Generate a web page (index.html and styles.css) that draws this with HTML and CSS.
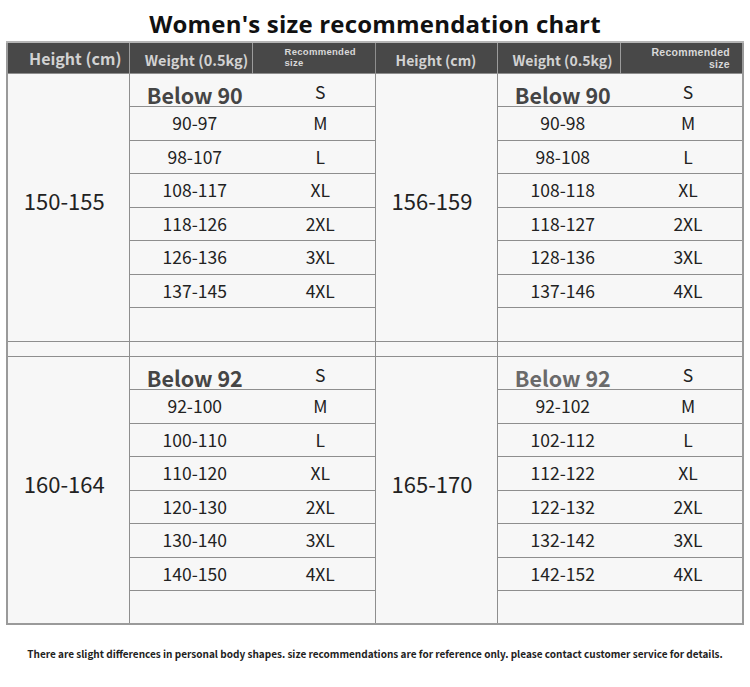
FILE: index.html
```html
<!DOCTYPE html>
<html lang="en">
<head>
<meta charset="utf-8">
<title>Women's size recommendation chart</title>
<link rel="stylesheet" href="styles.css">
</head>
<body>
<main class="page">
  <h1 class="title">Women's size recommendation chart</h1>
  <table class="chart">
    <colgroup>
      <col class="c-h"><col class="c-w"><col class="c-s">
      <col class="c-h"><col class="c-w"><col class="c-s">
    </colgroup>
    <thead>
      <tr class="head">
        <th class="th-h th-big">Height (cm)</th>
        <th class="th-w th-w-l">Weight (0.5kg)</th>
        <th class="th-s th-s-l"><span class="rec">Recommended<br>size</span></th>
        <th class="th-h half">Height (cm)</th>
        <th class="th-w">Weight (0.5kg)</th>
        <th class="th-s th-s-r"><span class="rec">Recommended<br>size</span></th>
      </tr>
    </thead>
    <tbody>
      <tr class="first">
        <td class="hcell" rowspan="8">150-155</td>
        <td class="w below">Below 90</td><td class="s s-top">S</td>
        <td class="hcell half" rowspan="8">156-159</td>
        <td class="w below">Below 90</td><td class="s s-top">S</td>
      </tr>
      <tr><td class="w">90-97</td><td class="s">M</td><td class="w">90-98</td><td class="s">M</td></tr>
      <tr><td class="w">98-107</td><td class="s">L</td><td class="w">98-108</td><td class="s">L</td></tr>
      <tr><td class="w">108-117</td><td class="s">XL</td><td class="w">108-118</td><td class="s">XL</td></tr>
      <tr><td class="w">118-126</td><td class="s">2XL</td><td class="w">118-127</td><td class="s">2XL</td></tr>
      <tr><td class="w">126-136</td><td class="s">3XL</td><td class="w">128-136</td><td class="s">3XL</td></tr>
      <tr><td class="w">137-145</td><td class="s">4XL</td><td class="w">137-146</td><td class="s">4XL</td></tr>
      <tr><td class="w"></td><td class="s"></td><td class="w"></td><td class="s"></td></tr>
      <tr class="band">
        <td></td><td class="w"></td><td class="s"></td>
        <td class="half"></td><td class="w"></td><td class="s"></td>
      </tr>
      <tr class="first">
        <td class="hcell" rowspan="8">160-164</td>
        <td class="w below">Below 92</td><td class="s s-top">S</td>
        <td class="hcell half" rowspan="8">165-170</td>
        <td class="w below light">Below 92</td><td class="s s-top">S</td>
      </tr>
      <tr><td class="w">92-100</td><td class="s">M</td><td class="w">92-102</td><td class="s">M</td></tr>
      <tr><td class="w">100-110</td><td class="s">L</td><td class="w">102-112</td><td class="s">L</td></tr>
      <tr><td class="w">110-120</td><td class="s">XL</td><td class="w">112-122</td><td class="s">XL</td></tr>
      <tr><td class="w">120-130</td><td class="s">2XL</td><td class="w">122-132</td><td class="s">2XL</td></tr>
      <tr><td class="w">130-140</td><td class="s">3XL</td><td class="w">132-142</td><td class="s">3XL</td></tr>
      <tr><td class="w">140-150</td><td class="s">4XL</td><td class="w">142-152</td><td class="s">4XL</td></tr>
      <tr><td class="w"></td><td class="s"></td><td class="w"></td><td class="s"></td></tr>
    </tbody>
  </table>
  <p class="note">There are slight differences in personal body shapes. size recommendations are for reference only. please contact customer service for details.</p>
</main>
</body>
</html>
```

FILE: styles.css
```css
html, body {
  margin: 0;
  padding: 0;
  background: #ffffff;
}

.page {
  width: 750px;
  padding: 0 6px;
  box-sizing: border-box;
  font-family: "Noto Sans CJK SC", "Noto Sans", sans-serif;
  color: #222;
}

.title {
  margin: 0;
  height: 41px;
  padding-top: 10px;
  box-sizing: border-box;
  font-family: "Open Sans", "Noto Sans", sans-serif;
  font-weight: 700;
  font-size: 24px;
  line-height: 28px;
  text-align: center;
  color: #111;
  letter-spacing: 0.2px;
}

.chart {
  width: 737px;
  table-layout: fixed;
  border-collapse: collapse;
  border: 2px solid #9a9a9a;
  background: #f7f7f7;
}

.c-h { width: 122px; }
.c-w { width: 123px; }
.c-s { width: 123px; }

.head {
  height: 31px;
  background: #484848;
}

.head th {
  padding: 0;
  color: #d2d2d2;
  font-weight: 700;
  font-size: 14px;
  vertical-align: bottom;
  padding-bottom: 3px;
  border-left: 1px solid #9c9c9c;
  border-top: 2px solid #b5b5b5;
  text-align: center;
}

.head .th-big {
  font-size: 16px;
  padding-left: 14px;
}

.head .th-w {
  padding-left: 8px;
}

.head .th-w-l {
  font-size: 14.5px;
  padding-left: 12px;
}

.rec {
  display: inline-block;
  font-family: "Liberation Sans", "Noto Sans", sans-serif;
  font-size: 9.5px;
  line-height: 11px;
  font-weight: 700;
  letter-spacing: 0.3px;
  text-align: left;
  color: #d8d8d8;
}

.head .th-s-l {
  text-align: left;
  padding-left: 32px;
  padding-bottom: 3px;
}

.head .th-s-r {
  text-align: right;
  padding-right: 12px;
  padding-bottom: 1px;
}

.th-s-r .rec {
  text-align: right;
  font-size: 10.5px;
  line-height: 11.5px;
}

tbody tr {
  height: 33.5px;
}

tbody td {
  padding: 0;
  text-align: center;
  vertical-align: middle;
  border-top: 1px solid #8e8e8e;
  font-size: 17.5px;
  line-height: 20px;
}

.hcell {
  font-size: 22px;
  border-right: 1px solid #8e8e8e;
  padding-bottom: 14px;
  padding-right: 8px;
}

td.half, th.half {
  border-left: 1px solid #8e8e8e;
}

.w {
  padding-left: 8px;
  border-left: 1px solid #8e8e8e;
}

.s {
  padding-left: 14px;
}

.below {
  font-weight: 700;
  font-size: 21.5px;
  color: #454545;
  vertical-align: bottom;
  padding-bottom: 0;
  line-height: 23px;
}

.below.light {
  color: #6a6a6a;
}

.s-top {
  vertical-align: bottom;
  padding-bottom: 4px;
}

.band {
  height: 14px;
}

.band td {
  height: 14px;
}

.note {
  margin: 21px 0 0;
  font-size: 10px;
  font-weight: 700;
  text-align: center;
  color: #222;
}
```
